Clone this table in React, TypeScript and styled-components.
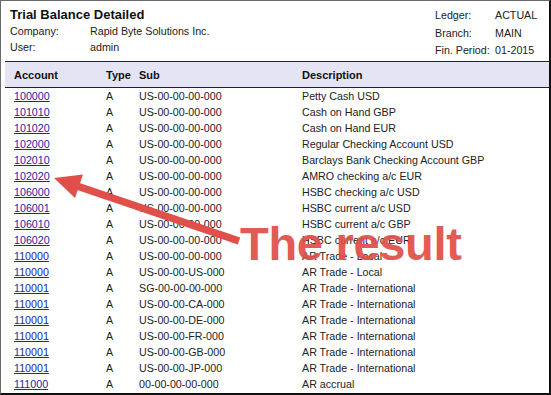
import React from 'react';
import styled, { createGlobalStyle } from 'styled-components';

interface Row {
    account: string;
    type: string;
    sub: string;
    description: string;
}

const rows: Row[] = [
    { account: '100000', type: 'A', sub: 'US-00-00-00-000', description: 'Petty Cash USD' },
    { account: '101010', type: 'A', sub: 'US-00-00-00-000', description: 'Cash on Hand GBP' },
    { account: '101020', type: 'A', sub: 'US-00-00-00-000', description: 'Cash on Hand EUR' },
    { account: '102000', type: 'A', sub: 'US-00-00-00-000', description: 'Regular Checking Account USD' },
    { account: '102010', type: 'A', sub: 'US-00-00-00-000', description: 'Barclays Bank Checking Account GBP' },
    { account: '102020', type: 'A', sub: 'US-00-00-00-000', description: 'AMRO checking a/c EUR' },
    { account: '106000', type: 'A', sub: 'US-00-00-00-000', description: 'HSBC checking a/c USD' },
    { account: '106001', type: 'A', sub: 'US-00-00-00-000', description: 'HSBC current a/c USD' },
    { account: '106010', type: 'A', sub: 'US-00-00-00-000', description: 'HSBC current a/c GBP' },
    { account: '106020', type: 'A', sub: 'US-00-00-00-000', description: 'HSBC current a/c EUR' },
    { account: '110000', type: 'A', sub: 'US-00-00-00-000', description: 'AR Trade - Local' },
    { account: '110000', type: 'A', sub: 'US-00-00-US-000', description: 'AR Trade - Local' },
    { account: '110001', type: 'A', sub: 'SG-00-00-00-000', description: 'AR Trade - International' },
    { account: '110001', type: 'A', sub: 'US-00-00-CA-000', description: 'AR Trade - International' },
    { account: '110001', type: 'A', sub: 'US-00-00-DE-000', description: 'AR Trade - International' },
    { account: '110001', type: 'A', sub: 'US-00-00-FR-000', description: 'AR Trade - International' },
    { account: '110001', type: 'A', sub: 'US-00-00-GB-000', description: 'AR Trade - International' },
    { account: '110001', type: 'A', sub: 'US-00-00-JP-000', description: 'AR Trade - International' },
    { account: '111000', type: 'A', sub: '00-00-00-00-000', description: 'AR accrual' },
];

const GlobalStyle = createGlobalStyle`
  body {
    margin: 0;
    background: #fff;
    font-family: 'Liberation Sans', Arial, sans-serif;
  }
`;

const Frame = styled.div`
  position: relative;
  width: 551px;
  height: 395px;
  box-sizing: border-box;
  border-top: 1px solid #6a6a6a;
  border-left: 1px solid #6a6a6a;
  border-right: 2px solid #111;
  border-bottom: 2px solid #111;
  overflow: hidden;
  color: #222;
  font-size: 10.7px;
`;

const ReportHead = styled.div`
  display: flex;
  justify-content: space-between;
  height: 60px;
  padding: 5px 0 0 9px;
  box-sizing: border-box;
`;

const Title = styled.div`
  font-size: 13px;
  font-weight: bold;
  line-height: 18px;
  color: #111;
`;

const InfoGrid = styled.div<{ $label: number; $value?: number }>`
  display: grid;
  grid-template-columns: ${p => p.$label}px ${p => (p.$value ? `${p.$value}px` : 'auto')};
  line-height: 15.5px;
  white-space: nowrap;
`;

const RightInfo = styled(InfoGrid)`
  margin-top: 2px;
  padding-right: 4px;
`;

const Table = styled.div`
  margin-left: 4px;
`;

const HeaderRow = styled.div`
  display: grid;
  grid-template-columns: 92px 33px 163px 1fr;
  padding-left: 9px;
  height: 25px;
  align-items: center;
  background: #e4e4f5;
  border-top: 1px solid #1a1a6e;
  border-bottom: 1px solid #1a1a6e;
  font-weight: bold;
  font-size: 11px;
  color: #111;
`;

const DataRow = styled.div`
  display: grid;
  grid-template-columns: 92px 33px 163px 1fr;
  padding-left: 9px;
  height: 16px;
  line-height: 16px;
  &:first-of-type {
    margin-top: 1px;
  }
`;

const AccountLink = styled.a`
  color: #2222a6;
  text-decoration: underline;
  cursor: pointer;
`;

const Overlay = styled.svg`
  position: absolute;
  left: 0;
  top: 0;
  pointer-events: none;
`;

const Callout = styled.div`
  position: absolute;
  left: 239px;
  top: 219px;
  font-family: 'Liberation Sans', Arial, sans-serif;
  font-weight: bold;
  font-size: 47px;
  letter-spacing: -0.3px;
  line-height: 1;
  color: #e0504a;
  opacity: 0.93;
  white-space: nowrap;
`;

const App: React.FC = () => {
    return (
        <>
            <GlobalStyle />
            <Frame>
                <ReportHead>
                    <div>
                        <Title>Trial Balance Detailed</Title>
                        <InfoGrid $label={80}>
                            <span>Company:</span>
                            <span>Rapid Byte Solutions Inc.</span>
                            <span>User:</span>
                            <span>admin</span>
                        </InfoGrid>
                    </div>
                    <RightInfo $label={60} $value={50}>
                        <span>Ledger:</span>
                        <span>ACTUAL</span>
                        <span>Branch:</span>
                        <span>MAIN</span>
                        <span>Fin. Period:</span>
                        <span>01-2015</span>
                    </RightInfo>
                </ReportHead>
                <Table>
                    <HeaderRow>
                        <span>Account</span>
                        <span>Type</span>
                        <span>Sub</span>
                        <span>Description</span>
                    </HeaderRow>
                    {rows.map((r, i) => (
                        <DataRow key={i}>
                            <span><AccountLink>{r.account}</AccountLink></span>
                            <span>{r.type}</span>
                            <span>{r.sub}</span>
                            <span>{r.description}</span>
                        </DataRow>
                    ))}
                </Table>
                <Overlay width="551" height="395" viewBox="0 0 551 395">
                    <line x1="76" y1="185" x2="238" y2="240" stroke="#e0504a" strokeWidth="7.5" strokeLinecap="butt" />
                    <polygon points="53,177 82,173.5 74,197" fill="#e0504a" />
                </Overlay>
                <Callout>The result</Callout>
            </Frame>
        </>
    );
};

export default App;
